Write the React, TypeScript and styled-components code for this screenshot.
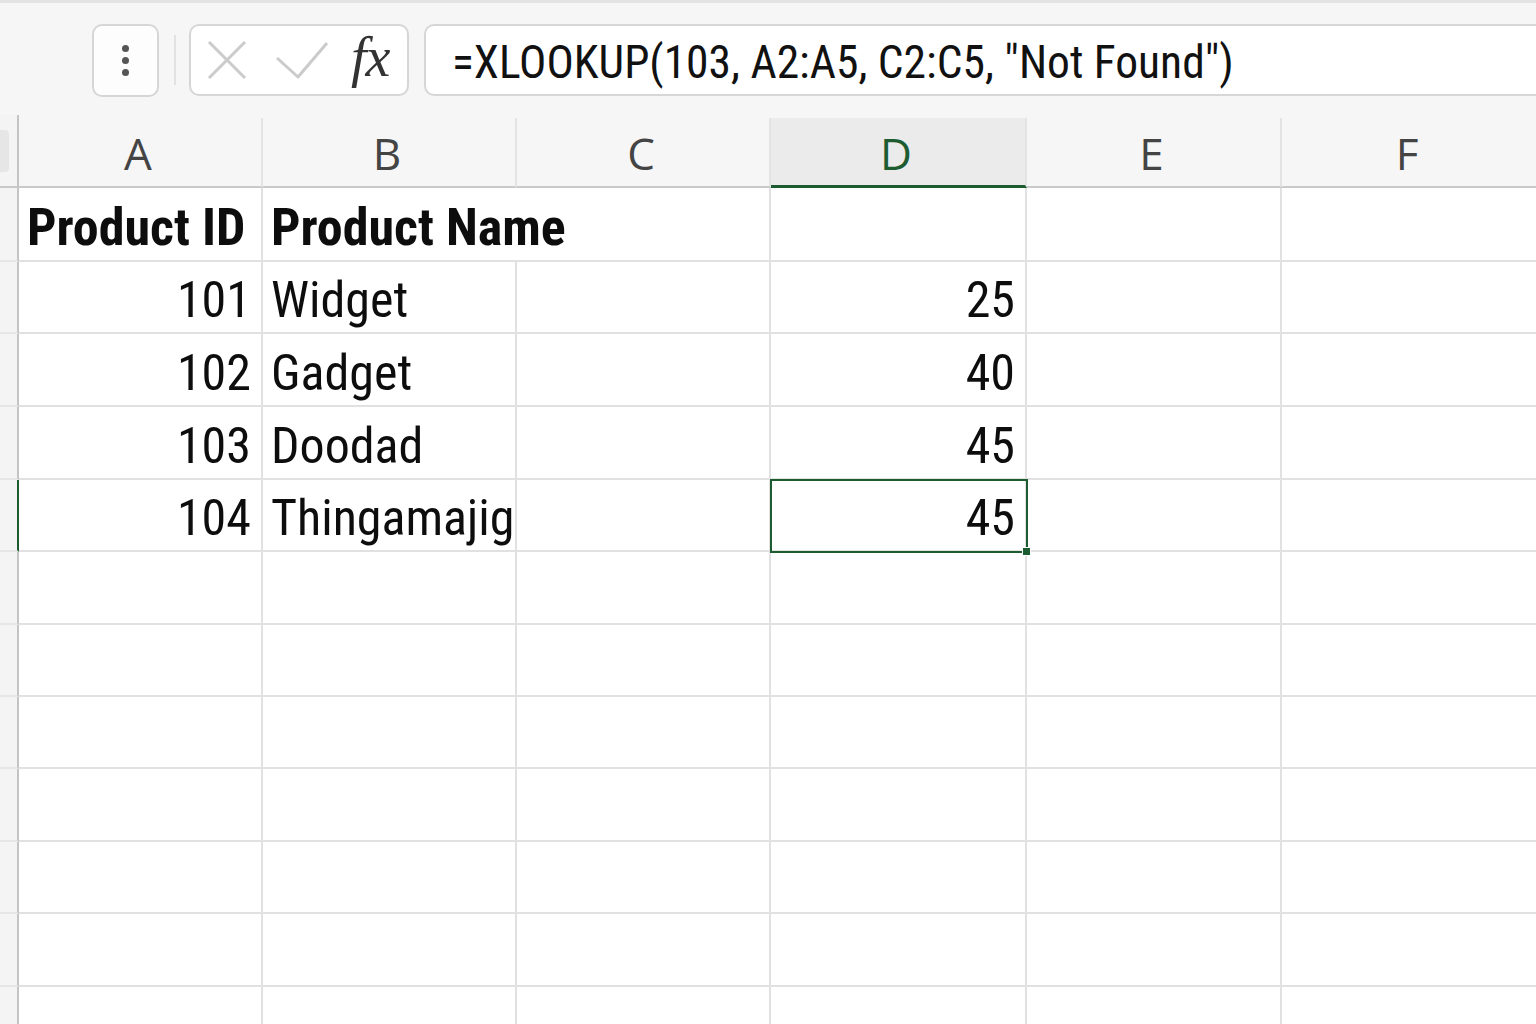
import React from 'react'
import styled, { createGlobalStyle } from 'styled-components'

const GlobalStyle = createGlobalStyle`
  html, body { margin: 0; padding: 0; background: #ffffff; overflow: hidden; }
  * { box-sizing: border-box; }
`

const GREEN = '#1d5c31'
const GRID = '#e1e1e1'

const columns = ['A', 'B', 'C', 'D', 'E', 'F']
const colTemplate = '19px 244px 254px 254px 256px 255px 1fr'

type Row = { a?: string; b?: string; d?: string; head?: boolean }

const rows: Row[] = [
  { a: 'Product ID', b: 'Product Name', head: true },
  { a: '101', b: 'Widget', d: '25' },
  { a: '102', b: 'Gadget', d: '40' },
  { a: '103', b: 'Doodad', d: '45' },
  { a: '104', b: 'Thingamajig', d: '45' },
  {}, {}, {}, {}, {}, {}, {},
]

const SELECTED_ROW = 4
const SELECTED_COL = 'D'

const Page = styled.div`
  width: 1536px;
  height: 1024px;
  background: #ffffff;
  overflow: hidden;
`

const Toolbar = styled.div`
  height: 115px;
  background: #f6f6f6;
  border-top: 3px solid #e3e3e3;
  display: flex;
  align-items: flex-start;
  padding: 21px 0 0 92px;
`

const MenuButton = styled.div`
  width: 67px;
  height: 73px;
  border: 2px solid #d6d6d6;
  border-radius: 10px;
  background: #fdfdfd;
  display: flex;
  flex-direction: column;
  align-items: center;
  justify-content: center;
  gap: 5px;
`

const Dot = styled.span`
  width: 7px;
  height: 7px;
  border-radius: 50%;
  background: #555555;
`

const Divider = styled.div`
  width: 2px;
  height: 50px;
  margin: 11px 13px 0 15px;
  background: #e2e2e2;
`

const FuncBox = styled.div`
  width: 220px;
  height: 72px;
  border: 2px solid #d6d6d6;
  border-radius: 10px;
  background: #ffffff;
  display: flex;
  align-items: center;
  padding-left: 16px;
`

const Fx = styled.span`
  font-family: "Liberation Serif", "DejaVu Serif", serif;
  font-style: italic;
  font-size: 56px;
  color: #333333;
  margin-left: 22px;
  margin-top: -6px;
  letter-spacing: -1px;
`

const FormulaBox = styled.div`
  flex: 1;
  height: 72px;
  margin-left: 15px;
  border: 2px solid #d6d6d6;
  border-right: none;
  border-radius: 10px 0 0 10px;
  background: #ffffff;
  display: flex;
  align-items: center;
  padding: 5px 0 0 26px;
  font-family: "Roboto Condensed", Roboto, sans-serif;
  font-stretch: condensed;
  font-size: 45.5px;
  color: #111111;
  white-space: nowrap;
`

const Grid = styled.div`
  display: flex;
  flex-direction: column;
`

const GridRow = styled.div<{ h: number }>`
  display: grid;
  grid-template-columns: ${colTemplate};
  height: ${({ h }) => h}px;
`

const HeadRowWrap = styled.div`
  background: #f6f6f6;
`

const Corner = styled.div`
  background: #f4f4f4;
  border-right: 2px solid #c4c4c4;
  border-bottom: 2px solid #c9c9c9;
  padding-top: 15px;
`

const CornerTab = styled.div`
  width: 9px;
  height: 42px;
  background: #e6e6e6;
  border-radius: 0 4px 4px 0;
`

const ColHead = styled.div<{ active: boolean; last: boolean }>`
  display: flex;
  align-items: center;
  justify-content: center;
  margin-top: 3px;
  padding: 2px 4px 0 0;
  font-family: "Open Sans", "Liberation Sans", sans-serif;
  font-size: 44px;
  color: ${({ active }) => (active ? GREEN : '#444444')};
  background: ${({ active }) => (active ? '#ebebeb' : '#f6f6f6')};
  border-right: ${({ last }) => (last ? 'none' : '2px solid #e3e3e3')};
  border-bottom: ${({ active }) => (active ? `3px solid ${GREEN}` : '2px solid #c9c9c9')};
`

const Gutter = styled.div<{ active: boolean }>`
  background: #f4f4f4;
  border-right: 2px solid ${({ active }) => (active ? GREEN : '#c4c4c4')};
  border-bottom: 2px solid #e6e6e6;
`

const Cell = styled.div<{ align?: 'left' | 'right'; bold?: boolean; noRight?: boolean; selected?: boolean }>`
  position: relative;
  display: flex;
  align-items: center;
  justify-content: ${({ align }) => (align === 'right' ? 'flex-end' : 'flex-start')};
  padding: 6px ${({ align }) => (align === 'right' ? '10px' : '0')} 0 ${({ align }) => (align === 'right' ? '0' : '8px')};
  border-right: ${({ noRight }) => (noRight ? 'none' : `2px solid ${GRID}`)};
  border-bottom: 2px solid ${GRID};
  font-family: "Roboto Condensed", Roboto, sans-serif;
  font-stretch: condensed;
  font-size: ${({ bold }) => (bold ? 52 : 50)}px;
  font-weight: ${({ bold }) => (bold ? 700 : 400)};
  color: #0d0d0d;
  white-space: nowrap;
  ${({ selected }) =>
    selected &&
    `
    outline: 2px solid ${GREEN};
    outline-offset: -1px;
    z-index: 2;
  `}
`

const FillHandle = styled.span`
  position: absolute;
  right: -6px;
  bottom: -6px;
  width: 9px;
  height: 9px;
  background: ${GREEN};
  border: 1px solid #ffffff;
`

const XIcon = () => (
  <svg width="40" height="40" viewBox="0 0 40 40">
    <path d="M2 2 L38 38 M38 2 L2 38" stroke="#cbcbcb" strokeWidth="3" fill="none" />
  </svg>
)

const CheckIcon = () => (
  <svg width="54" height="40" viewBox="0 0 54 40" style={{ marginLeft: 28 }}>
    <path d="M2 18 L23 37 L52 3" stroke="#cbcbcb" strokeWidth="3" fill="none" strokeLinejoin="round" />
  </svg>
)

const rowHeights = [74, 72, 73, 73, 72, 73, 72, 72, 73, 72, 73, 73]

export default function App() {
  return (
    <Page>
      <GlobalStyle />
      <Toolbar>
        <MenuButton>
          <Dot />
          <Dot />
          <Dot />
        </MenuButton>
        <Divider />
        <FuncBox>
          <XIcon />
          <CheckIcon />
          <Fx>fx</Fx>
        </FuncBox>
        <FormulaBox>=XLOOKUP(103, A2:A5, C2:C5, "Not Found")</FormulaBox>
      </Toolbar>

      <Grid>
        <HeadRowWrap>
          <GridRow h={73}>
            <Corner>
              <CornerTab />
            </Corner>
            {columns.map((c, i) => (
              <ColHead key={c} active={c === SELECTED_COL} last={i === columns.length - 1}>
                {c}
              </ColHead>
            ))}
          </GridRow>
        </HeadRowWrap>

        {rows.map((r, i) => (
          <GridRow key={i} h={rowHeights[i]}>
            <Gutter active={i === SELECTED_ROW} />
            <Cell align={r.head ? 'left' : 'right'} bold={r.head}>
              {r.a}
            </Cell>
            <Cell bold={r.head} noRight={r.head}>
              {r.b}
            </Cell>
            <Cell />
            <Cell align="right" selected={i === SELECTED_ROW}>
              {r.d}
              {i === SELECTED_ROW && <FillHandle />}
            </Cell>
            <Cell />
            <Cell noRight />
          </GridRow>
        ))}
      </Grid>
    </Page>
  )
}
